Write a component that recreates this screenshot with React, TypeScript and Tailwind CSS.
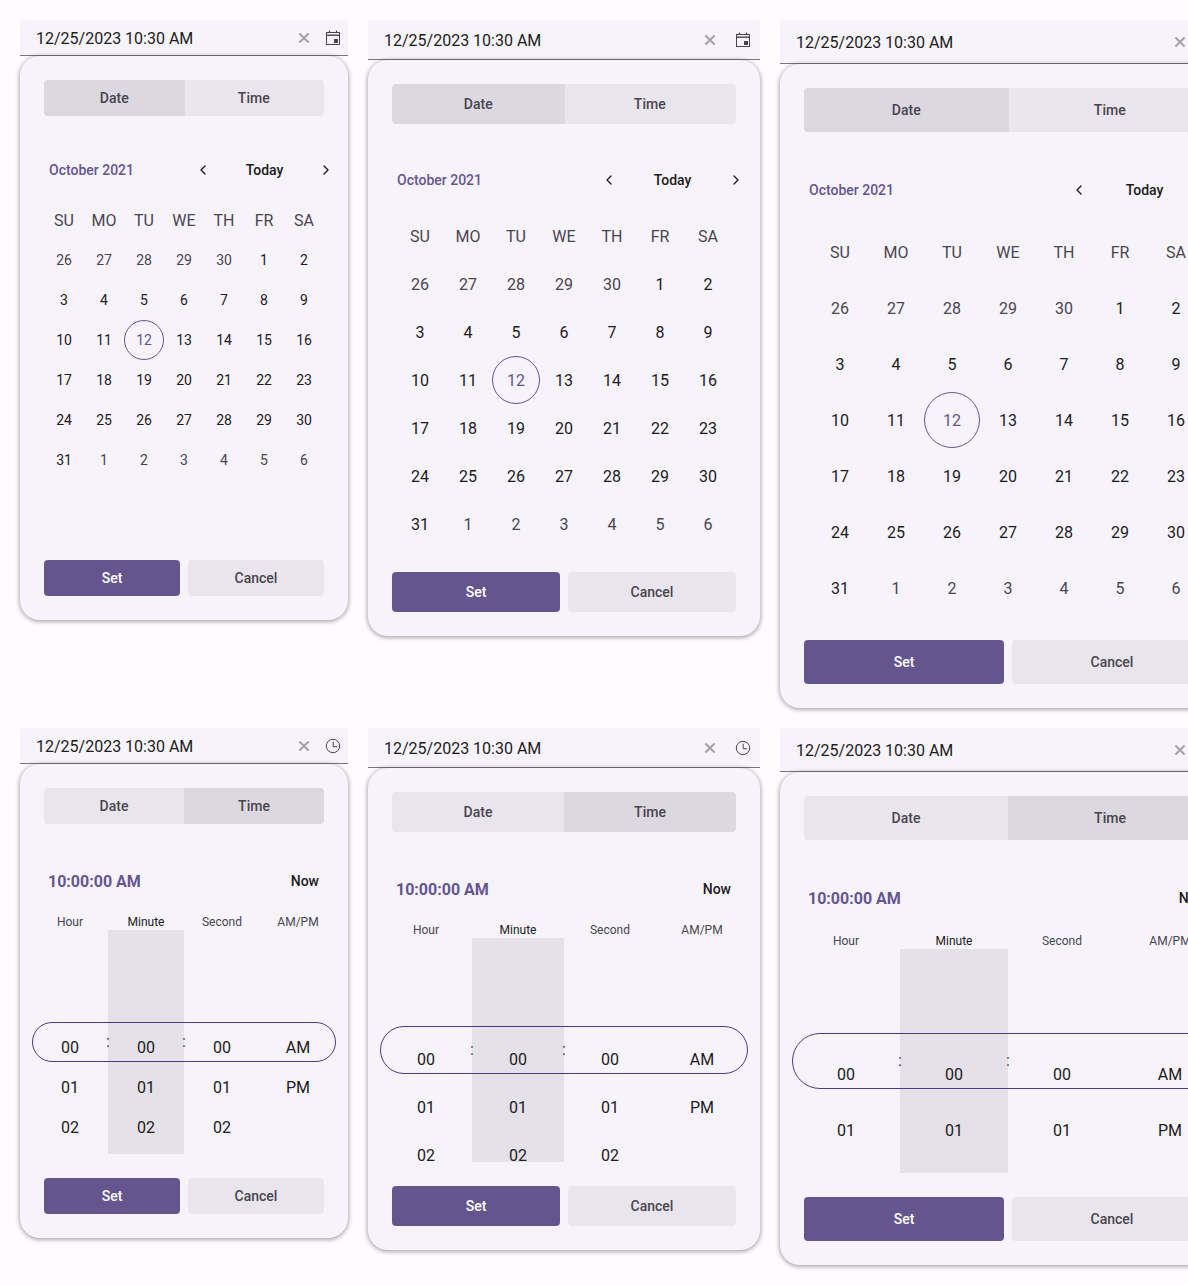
import { ChevronLeft, ChevronRight } from "lucide-react";

type Size = "sm" | "md" | "lg";

const sizes = {
  sm: {
    panel: "w-[328px]",
    input: "h-9",
    action: "w-[30px]",
    clear: "w-7",
    bar: "h-9",
    navBtn: "w-9 h-9",
    calHeader: "h-9",
    grid: "w-[280px]",
    cell: "h-10",
    dayText: "text-sm",
    circle: "w-10 h-10",
    calGap: "mt-20",
    timeHeader: "mt-[37px] mb-[13px]",
    row: "h-10",
    pill: "h-10",
  },
  md: {
    panel: "w-[392px]",
    input: "h-10",
    action: "w-[34px]",
    clear: "w-8",
    bar: "h-10",
    navBtn: "w-10 h-10",
    calHeader: "h-10",
    grid: "w-[336px]",
    cell: "h-12",
    dayText: "text-base pt-0.5",
    circle: "w-12 h-12",
    calGap: "mt-6",
    timeHeader: "mt-[37px] mb-[13px]",
    row: "h-12",
    pill: "h-12",
  },
  lg: {
    panel: "w-[456px]",
    input: "h-11",
    action: "w-[38px]",
    clear: "w-9",
    bar: "h-11",
    navBtn: "w-11 h-11",
    calHeader: "h-11",
    grid: "w-[392px]",
    cell: "h-14",
    dayText: "text-base pt-0.5",
    circle: "w-14 h-14",
    calGap: "mt-6",
    timeHeader: "mt-[38px] mb-[15px]",
    row: "h-14",
    pill: "h-14",
  },
};

const weekdays = ["SU", "MO", "TU", "WE", "TH", "FR", "SA"];

const weeks = [
  ["26", "27", "28", "29", "30", "1", "2"],
  ["3", "4", "5", "6", "7", "8", "9"],
  ["10", "11", "12", "13", "14", "15", "16"],
  ["17", "18", "19", "20", "21", "22", "23"],
  ["24", "25", "26", "27", "28", "29", "30"],
  ["31", "1", "2", "3", "4", "5", "6"],
];

function CalendarIcon() {
  return (
    <svg width="16" height="16" viewBox="0 0 16 16" fill="none" stroke="#49454f" strokeWidth="1">
      <rect x="1.5" y="2.5" width="13" height="12" />
      <path d="M1.5 5.2h13" strokeWidth="1.4" />
      <path d="M4.5 0.5v2.5M11.5 0.5v2.5" strokeWidth="1.2" />
      <rect x="9" y="9" width="4" height="4" fill="#49454f" stroke="none" />
    </svg>
  );
}

function ClockIcon() {
  return (
    <svg width="16" height="16" viewBox="0 0 16 16" fill="none" stroke="#49454f" strokeWidth="1">
      <circle cx="8" cy="8" r="6.7" />
      <path d="M8.2 3.7V8.7H12" />
    </svg>
  );
}

function ClearIcon() {
  return (
    <svg width="12" height="12" viewBox="0 0 12 12" fill="none" stroke="#a5a2aa" strokeWidth="2.1">
      <path d="M1.4 1.4l9.2 9.2M10.6 1.4l-9.2 9.2" />
    </svg>
  );
}

function Field({ size, mode }: { size: Size; mode: "date" | "time" }) {
  const s = sizes[size];
  return (
    <div className={`flex items-center pl-4 bg-[#f6f3fa] rounded-t border-b border-[#79747e] ${s.input}`}>
      <span className="flex-1 pt-0.5 text-base text-[#1d1b20]">12/25/2023 10:30 AM</span>
      <span className={`flex justify-center ${s.clear}`}>
        <ClearIcon />
      </span>
      <span className={`flex justify-center ${s.action}`}>
        {mode === "date" ? <CalendarIcon /> : <ClockIcon />}
      </span>
    </div>
  );
}

function Tabs({ size, active }: { size: Size; active: "date" | "time" }) {
  const s = sizes[size];
  const on = "bg-[#dcd8e0]";
  const off = "bg-[#e9e5ec]";
  return (
    <div className={`flex rounded overflow-hidden text-sm font-medium text-[#49454f] ${s.bar}`}>
      <div
        className={`flex-1 flex items-center justify-center ${active === "date" ? `${on} -mr-px z-10` : off}`}
      >
        Date
      </div>
      <div className={`flex-1 flex items-center justify-center ${active === "time" ? on : off}`}>
        Time
      </div>
    </div>
  );
}

function Actions({ size, className }: { size: Size; className: string }) {
  const s = sizes[size];
  return (
    <div className={`flex gap-2 text-sm font-medium ${s.bar} ${className}`}>
      <button className="flex-1 rounded bg-[#65558f] text-white">Set</button>
      <button className="flex-1 rounded bg-[#e9e5ec] text-[#49454f]">Cancel</button>
    </div>
  );
}

function DatePicker({ size }: { size: Size }) {
  const s = sizes[size];
  return (
    <div className={`flex flex-col ${s.panel}`}>
      <Field size={size} mode="date" />
      <div className="px-6 py-6 bg-[#f6f3fa] rounded-[20px] shadow-[0_1px_4px_1px_rgba(0,0,0,0.32)]">
        <Tabs size={size} active="date" />
        <div className={`flex items-center mt-9 mb-3 pl-[5px] -mr-5 text-sm font-medium ${s.calHeader}`}>
          <span className="flex-1 text-[#65558f]">October 2021</span>
          <span className={`flex items-center justify-center text-[#1d1b20] ${s.navBtn}`}>
            <ChevronLeft size={16} strokeWidth={2} />
          </span>
          <span className="w-[87px] text-center text-[#1d1b20]">Today</span>
          <span className={`flex items-center justify-center text-[#1d1b20] ${s.navBtn}`}>
            <ChevronRight size={16} strokeWidth={2} />
          </span>
        </div>
        <div className={`grid grid-cols-7 mx-auto ${s.grid}`}>
          {weekdays.map((d) => (
            <div key={d} className={`flex items-center justify-center pt-0.5 text-base text-[#49454f] ${s.cell}`}>
              {d}
            </div>
          ))}
          {weeks.map((week, w) =>
            week.map((d, i) => {
              const muted = (w === 0 && i < 5) || (w === 5 && i > 0);
              const selected = w === 2 && i === 2;
              return (
                <div key={`${w}-${i}`} className={`flex items-center justify-center ${s.cell}`}>
                  <span
                    className={`flex items-center justify-center rounded-full ${s.circle} ${s.dayText} ${
                      selected
                        ? "border border-[#65558f] text-[#65558f]"
                        : muted
                          ? "text-[#49454f]"
                          : "text-[#1d1b20]"
                    }`}
                  >
                    {d}
                  </span>
                </div>
              );
            })
          )}
        </div>
        <Actions size={size} className={s.calGap} />
      </div>
    </div>
  );
}

function Wheel({ label, values, shaded, size }: { label: string; values: string[]; shaded?: boolean; size: Size }) {
  const s = sizes[size];
  return (
    <div className="flex-1 min-w-0">
      <div className={`h-4 leading-4 text-xs text-center ${shaded ? "text-[#1d1b20]" : "text-[#49454f]"}`}>
        {label}
      </div>
      <div className={`h-56 pt-[97px] overflow-hidden text-base text-[#1d1b20] ${shaded ? "bg-[#e4e2e8]" : ""}`}>
        {values.map((v) => (
          <div key={v} className={`flex items-center justify-center pt-0.5 ${s.row}`}>
            {v}
          </div>
        ))}
      </div>
    </div>
  );
}

function TimePicker({ size }: { size: Size }) {
  const s = sizes[size];
  const nums = ["00", "01", "02"];
  return (
    <div className={`flex flex-col ${s.panel}`}>
      <Field size={size} mode="time" />
      <div className="px-6 py-6 bg-[#f6f3fa] rounded-[20px] shadow-[0_1px_4px_1px_rgba(0,0,0,0.32)]">
        <Tabs size={size} active="time" />
        <div className={`flex items-center justify-between h-10 pl-1 pr-[5px] ${s.timeHeader}`}>
          <span className="pt-0.5 text-base font-bold text-[#65558f]">10:00:00 AM</span>
          <span className="text-sm font-medium text-[#1d1b20]">Now</span>
        </div>
        <div className="relative flex -mx-3">
          <Wheel label="Hour" values={nums} size={size} />
          <Wheel label="Minute" values={nums} shaded size={size} />
          <Wheel label="Second" values={nums} size={size} />
          <Wheel label="AM/PM" values={["AM", "PM"]} size={size} />
          <div className="absolute inset-x-0 top-4 h-56 flex items-center pointer-events-none">
            <div className={`w-full rounded-[28px] border border-[#4f378b] ${s.pill}`} />
          </div>
          <span className="absolute left-1/4 top-4 h-56 flex items-center -translate-x-1/2 text-base text-[#49454f]">:</span>
          <span className="absolute left-1/2 top-4 h-56 flex items-center -translate-x-1/2 text-base text-[#49454f]">:</span>
        </div>
        <Actions size={size} className="mt-6" />
      </div>
    </div>
  );
}

export default function App() {
  return (
    <div className="h-screen overflow-hidden bg-[#fffbff] p-5 font-['Roboto',sans-serif]">
      <div className="flex items-start gap-5 w-max">
        <DatePicker size="sm" />
        <DatePicker size="md" />
        <DatePicker size="lg" />
      </div>
      <div className="flex items-start gap-5 w-max mt-5">
        <TimePicker size="sm" />
        <TimePicker size="md" />
        <TimePicker size="lg" />
      </div>
    </div>
  );
}
